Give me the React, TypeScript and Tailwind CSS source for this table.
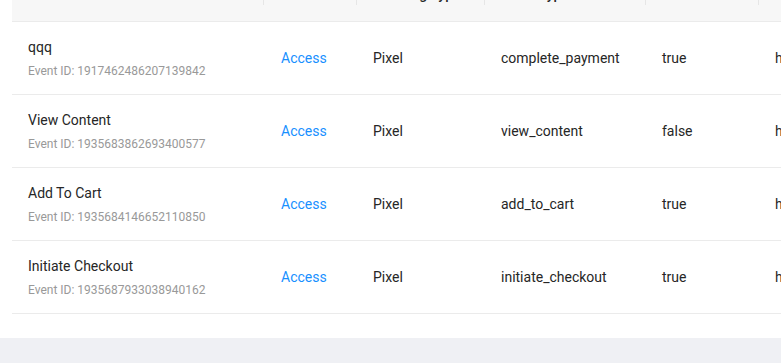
import React from "react";

type EventRow = {
  name: string;
  id: string;
  type: string;
  event: string;
  status: string;
  url: string;
};

const rows: EventRow[] = [
  { name: "qqq", id: "1917462486207139842", type: "Pixel", event: "complete_payment", status: "true", url: "https://shop.example.com/checkout/success" },
  { name: "View Content", id: "1935683862693400577", type: "Pixel", event: "view_content", status: "false", url: "https://shop.example.com/product" },
  { name: "Add To Cart", id: "1935684146652110850", type: "Pixel", event: "add_to_cart", status: "true", url: "https://shop.example.com/cart" },
  { name: "Initiate Checkout", id: "1935687933038940162", type: "Pixel", event: "initiate_checkout", status: "true", url: "https://shop.example.com/checkout" },
];

const cols = "grid grid-cols-[252px_93px_128px_161px_113px_260px]";

function HeadCell({ label, divider = true }: { label: string; divider?: boolean }) {
  return (
    <div className="relative px-4 py-4 text-[14px] leading-[22px] font-medium text-[#262626] whitespace-nowrap">
      {label}
      {divider && (
        <span className="absolute right-0 top-1/2 h-[22px] w-px -translate-y-1/2 bg-[#e6e6e6]" />
      )}
    </div>
  );
}

export default function App() {
  return (
    <div
      className="w-[781px] h-[363px] overflow-hidden bg-[#eff0f4]"
      style={{ fontFamily: "Roboto, 'Liberation Sans', Arial, sans-serif" }}
    >
      <div className="bg-white pl-3 pb-6 overflow-hidden">
        <div className="w-max -mt-[33px]">
          <div className={`${cols} bg-[#f7f7f7] border-b border-[#ebebeb]`}>
            <HeadCell label="Event Name" />
            <HeadCell label="Action" />
            <HeadCell label="Tracking Type" />
            <HeadCell label="Event Type" />
            <HeadCell label="Status" />
            <HeadCell label="URL" divider={false} />
          </div>
          {rows.map((r) => (
            <div
              key={r.id}
              className={`${cols} h-[73px] items-center border-b border-[#ebebeb] text-[14px] leading-[22px] text-[#262626]`}
            >
              <div className="px-4">
                <div className="mb-[3px]">{r.name}</div>
                <div className="text-[12px] leading-[20px] text-[#999999]">Event ID: {r.id}</div>
              </div>
              <div className="px-4 pl-[17px] text-[#1890ff]">Access</div>
              <div className="px-4">{r.type}</div>
              <div className="px-4">{r.event}</div>
              <div className="px-4">{r.status}</div>
              <div className="px-4 whitespace-nowrap">{r.url}</div>
            </div>
          ))}
        </div>
      </div>
    </div>
  );
}
